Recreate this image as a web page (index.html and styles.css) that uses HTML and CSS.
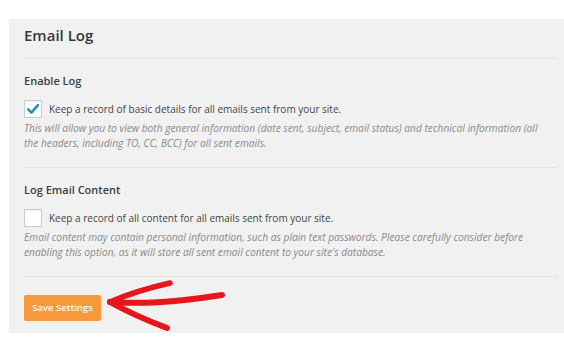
FILE: index.html
```html
<!DOCTYPE html>
<html lang="en">
<head>
<meta charset="utf-8">
<title>Email Log</title>
<link rel="stylesheet" href="styles.css">
</head>
<body>
<div class="panel">
  <div class="panel-header">
    <h2 class="panel-title">Email Log</h2>
  </div>
  <div class="section">
    <div class="section-label">Enable Log</div>
    <label class="check-row">
      <span class="checkbox">
        <svg class="check-icon" viewBox="0 0 18 18" width="18" height="18"><path d="M3.6 9.4 L7.2 13 L14.6 4.6" fill="none" stroke="#1e8cbe" stroke-width="2.8" stroke-linecap="round" stroke-linejoin="round"/></svg>
      </span>
      <span class="check-text">Keep a record of basic details for all emails sent from your site.</span>
    </label>
    <p class="desc">This will allow you to view both general information (date sent, subject, email status) and technical information (all<br>the headers, including TO, CC, BCC) for all sent emails.</p>
  </div>
  <div class="section">
    <div class="section-label">Log Email Content</div>
    <label class="check-row">
      <span class="checkbox"></span>
      <span class="check-text">Keep a record of all content for all emails sent from your site.</span>
    </label>
    <p class="desc">Email content may contain personal information, such as plain text passwords. Please carefully consider before<br>enabling this option, as it will store all sent email content to your site's database.</p>
  </div>
  <div class="panel-footer">
    <button class="save-btn" type="button">Save Settings</button>
  </div>
</div>
<svg class="annotation" viewBox="0 0 564 340" width="564" height="340">
  <path d="M110 302 C140 304 170 303 222 295" fill="none" stroke="#e8161c" stroke-width="6" stroke-linecap="round"/>
  <path d="M110 302 C128 294 148 288 170 283" fill="none" stroke="#e8161c" stroke-width="5.5" stroke-linecap="round"/>
  <path d="M110 302 C126 311 146 320 167 328" fill="none" stroke="#e8161c" stroke-width="6" stroke-linecap="round"/>
</svg>
</body>
</html>
```
FILE: styles.css
```css
html, body {
  margin: 0;
  padding: 0;
  background: #ffffff;
}

body {
  font-family: "Open Sans", "Noto Sans", "Liberation Sans", sans-serif;
  color: #23282d;
  width: 564px;
  height: 340px;
  overflow: hidden;
}

.panel {
  margin: 19px 0 0 9px;
  background: #f1f1f1;
  padding: 0 6px 12px 15px;
}

.panel-header {
  padding: 6px 0 13px;
  border-bottom: 1px solid #e2e2e2;
}

.panel-title {
  margin: 0;
  font-size: 15px;
  line-height: 20px;
  font-weight: 600;
  color: #32373c;
}

.section {
  padding: 14px 0 16px;
  border-bottom: 1px solid #e2e2e2;
}

.section-label {
  font-size: 11px;
  line-height: 16px;
  font-weight: 600;
  color: #3a3f44;
}

.check-row {
  display: flex;
  align-items: center;
  gap: 7px;
  margin-top: 11px;
  height: 18px;
}

.checkbox {
  box-sizing: border-box;
  width: 18px;
  height: 18px;
  background: #ffffff;
  border: 1px solid #c9cbcd;
  box-shadow: inset 0 1px 2px rgba(0, 0, 0, 0.07);
  display: flex;
  align-items: center;
  justify-content: center;
  flex: none;
}

.check-icon {
  display: block;
  width: 16px;
  height: 16px;
}

.check-text {
  font-size: 10px;
  line-height: 18px;
  color: #444444;
}

.desc {
  margin: 3px 0 0;
  font-size: 10.2px;
  line-height: 15px;
  font-style: italic;
  color: #8a8a8a;
  white-space: nowrap;
}

.panel-footer {
  padding-top: 18px;
}

.save-btn {
  display: block;
  width: 77px;
  height: 26px;
  padding: 0;
  border: none;
  border-radius: 2px;
  background: #f7983a;
  color: #ffffff;
  font-family: "Open Sans", "Noto Sans", "Liberation Sans", sans-serif;
  font-size: 9.5px;
  font-weight: 600;
  line-height: 26px;
  text-align: center;
}

.annotation {
  position: absolute;
  left: 0;
  top: 0;
  pointer-events: none;
}
```
